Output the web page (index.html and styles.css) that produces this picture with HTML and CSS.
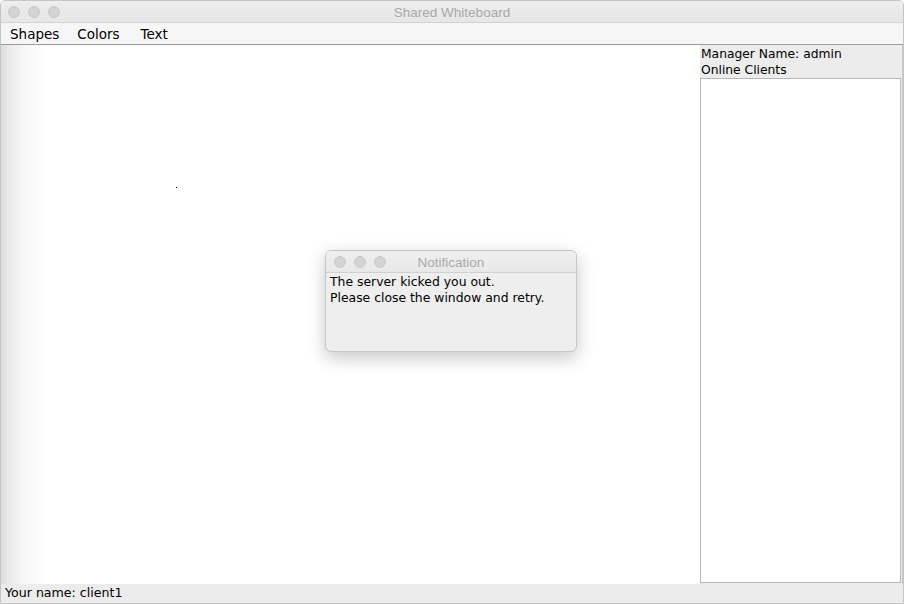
FILE: index.html
```html
<!DOCTYPE html>
<html>
<head>
<meta charset="utf-8">
<link rel="stylesheet" href="styles.css">
</head>
<body>
<div class="window">
  <div class="titlebar">
    <div class="lights"><span class="light"></span><span class="light"></span><span class="light"></span></div>
    <div class="title">Shared Whiteboard</div>
  </div>
  <div class="menubar">
    <span class="menu">Shapes</span>
    <span class="menu">Colors</span>
    <span class="menu">Text</span>
  </div>
  <div class="main">
    <div class="canvas"><span class="dot"></span></div>
    <div class="side">
      <div class="label">Manager Name: admin</div>
      <div class="label">Online Clients</div>
      <div class="list"></div>
    </div>
  </div>
  <div class="status">Your name: client1</div>

  <div class="dialog">
    <div class="dtitlebar">
      <div class="lights dl"><span class="light"></span><span class="light"></span><span class="light"></span></div>
      <div class="title">Notification</div>
    </div>
    <div class="dbody">
      <div>The server kicked you out.</div>
      <div>Please close the window and retry.</div>
    </div>
  </div>
</div>
</body>
</html>
```

FILE: styles.css
```css
html, body {
  margin: 0;
  padding: 0;
  background: #ffffff;
}
body {
  font-family: "DejaVu Sans", "Liberation Sans", sans-serif;
  color: #000;
}
.window {
  position: relative;
  width: 904px;
  height: 604px;
  box-sizing: border-box;
  border: 1px solid #c4c4c4;
  border-radius: 5px 5px 0 0;
  overflow: hidden;
  display: flex;
  flex-direction: column;
  background: #fff;
}
.titlebar {
  position: relative;
  height: 21px;
  flex: none;
  background: linear-gradient(#eeeeee, #e6e6e6);
  border-bottom: 1px solid #d2d2d2;
  display: flex;
  align-items: center;
  justify-content: center;
}
.lights {
  position: absolute;
  left: 7px;
  top: 5px;
  display: flex;
  gap: 8px;
}
.light {
  width: 12px;
  height: 12px;
  border-radius: 50%;
  background: #d4d4d4;
  box-sizing: border-box;
  border: 1px solid #c8c8c8;
}
.title {
  font-family: "Liberation Sans", Arial, sans-serif;
  font-size: 13.5px;
  color: #a9a9a9;
  line-height: 21px;
  padding-top: 2px;
}
.menubar {
  height: 22px;
  flex: none;
  background: #f6f6f6;
  border-bottom: 1px solid #9c9c9c;
  display: flex;
  align-items: center;
  padding-left: 9px;
  padding-top: 0;
  box-sizing: border-box;
  gap: 18px;
  font-size: 13.5px;
}
.menu:nth-child(2) {
  margin-right: 3px;
}
.main {
  flex: 1;
  display: flex;
  min-height: 0;
}
.canvas {
  position: relative;
  flex: 1;
  background: linear-gradient(to right, #dcdcdc 0px, #ececec 10px, #f7f7f7 24px, #ffffff 44px);
}
.dot {
  position: absolute;
  left: 175px;
  top: 142px;
  width: 1px;
  height: 1px;
  background: #000;
}
.side {
  width: 203px;
  flex: none;
  background: #ececec;
  display: flex;
  flex-direction: column;
  padding-top: 1px;
  padding-right: 1px;
  border-right: 1px solid #c8c8c8;
  box-sizing: border-box;
  font-size: 12.3px;
}
.label {
  height: 16px;
  line-height: 16px;
  padding-left: 1px;
}
.list {
  flex: 1;
  margin-top: 0;
  margin-bottom: 1px;
  background: #fff;
  border: 1px solid #b8b8b8;
}
.status {
  height: 19px;
  flex: none;
  background: #ececec;
  font-size: 12.6px;
  line-height: 17px;
  padding-left: 4px;
}
.dialog {
  position: absolute;
  left: 324px;
  top: 249px;
  width: 252px;
  height: 102px;
  box-sizing: border-box;
  border: 1px solid #c6c6c6;
  border-radius: 6px;
  background: #eeeeee;
  box-shadow: 0 6px 18px rgba(0,0,0,0.22);
  overflow: hidden;
}
.dtitlebar {
  position: relative;
  height: 21px;
  background: linear-gradient(#f0f0f0, #e8e8e8);
  border-bottom: 1px solid #d0d0d0;
  display: flex;
  align-items: center;
  justify-content: center;
}
.dl {
  left: 8px;
  top: 5px;
}
.dbody {
  padding: 1px 4px;
  font-size: 12.4px;
  line-height: 16px;
}
```
